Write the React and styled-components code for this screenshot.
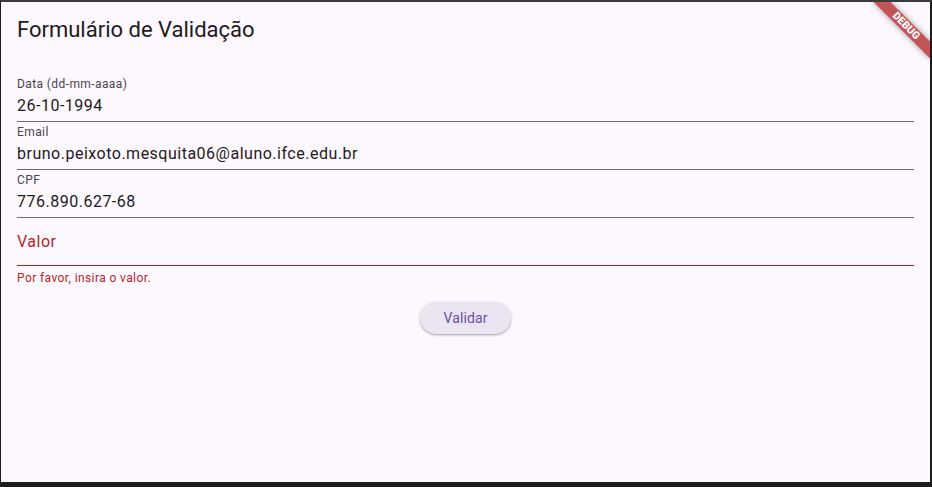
import React from 'react'
import styled, { createGlobalStyle } from 'styled-components'

const GlobalStyle = createGlobalStyle`
  html, body {
    margin: 0;
    padding: 0;
    background: #1c1c1c;
  }
  body {
    font-family: Roboto, "Noto Sans", "Liberation Sans", sans-serif;
  }
`

const Window = styled.div`
  border-top: 2px solid #3b3b3d;
  padding: 0 2px 5px 1px;
`

const Surface = styled.main`
  position: relative;
  height: 480px;
  box-sizing: border-box;
  background: #fdf7fe;
  padding: 14px 16px 0 16px;
  overflow: hidden;
  display: flex;
  flex-direction: column;
`

const Title = styled.h1`
  margin: 0 0 30px 0;
  font-size: 22px;
  line-height: 28px;
  font-weight: 400;
  color: #1d1b20;
`

const Field = styled.div`
  box-sizing: border-box;
  height: 48px;
  padding: ${p => (p.floating ? '2px 0 3px' : '12px 0 11px')};
  border-bottom: 1px solid ${p => (p.error ? '#b3261e' : '#6e6a72')};
  display: flex;
  flex-direction: column;
`

const Label = styled.label`
  font-size: 12px;
  line-height: 16px;
  letter-spacing: 0.4px;
  color: #49454f;
  margin-bottom: 2px;
`

const Value = styled.div`
  font-size: 16px;
  line-height: 24px;
  letter-spacing: 0.5px;
  color: ${p => (p.error ? '#b3261e' : '#1d1b20')};
`

const ErrorText = styled.div`
  margin-top: 4px;
  font-size: 12px;
  line-height: 16px;
  letter-spacing: 0.4px;
  color: #b3261e;
`

const Actions = styled.div`
  display: flex;
  justify-content: center;
  margin-top: 16px;
`

const Button = styled.button`
  height: 32px;
  padding: 0 24px;
  border: none;
  border-radius: 16px;
  background: #ebe5f1;
  color: #6750a4;
  font-family: inherit;
  font-size: 14px;
  font-weight: 400;
  letter-spacing: 0.1px;
  box-shadow: 0 1px 3px rgba(0, 0, 0, 0.25), 0 1px 1px rgba(0, 0, 0, 0.12);
  cursor: pointer;
`

const DebugBanner = styled.div`
  position: absolute;
  top: 18px;
  right: -16px;
  width: 80px;
  height: 12px;
  transform: rotate(45deg);
  background: rgba(176, 40, 40, 0.78);
  box-shadow: 0 0 6px rgba(0, 0, 0, 0.35);
  color: #fff;
  font-size: 10.5px;
  font-weight: 900;
  line-height: 12px;
  text-align: center;
`

const fields = [
  { label: 'Data (dd-mm-aaaa)', value: '26-10-1994' },
  { label: 'Email', value: 'bruno.peixoto.mesquita06@aluno.ifce.edu.br' },
  { label: 'CPF', value: '776.890.627-68' }
]

const App = () => {
  return (
    <>
      <GlobalStyle />
      <Window>
        <Surface>
          <Title>Formulário de Validação</Title>
          {fields.map(f => (
            <Field floating key={f.label}>
              <Label>{f.label}</Label>
              <Value>{f.value}</Value>
            </Field>
          ))}
          <Field error>
            <Value error>Valor</Value>
          </Field>
          <ErrorText>Por favor, insira o valor.</ErrorText>
          <Actions>
            <Button type="button">Validar</Button>
          </Actions>
          <DebugBanner>DEBUG</DebugBanner>
        </Surface>
      </Window>
    </>
  )
}

export default App
